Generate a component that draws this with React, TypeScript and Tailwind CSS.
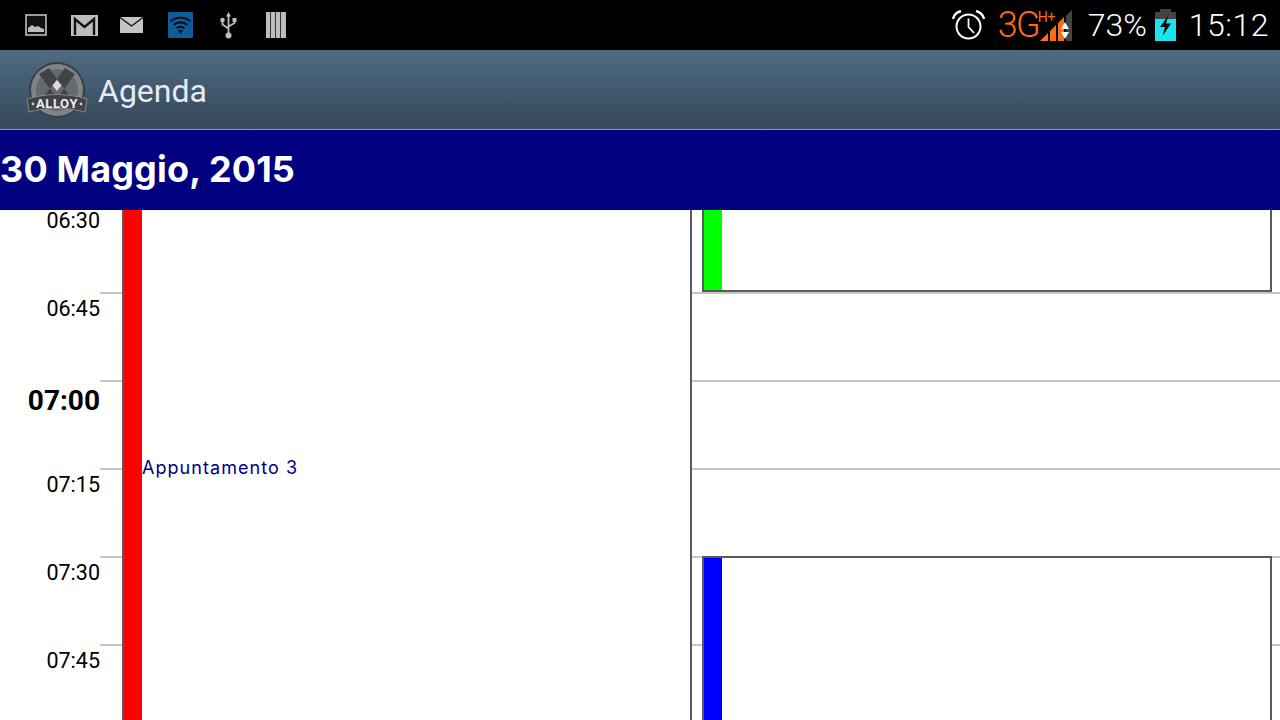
const rows = [
  { label: '06:45', bold: false },
  { label: '07:00', bold: true },
  { label: '07:15', bold: false },
  { label: '07:30', bold: false },
  { label: '07:45', bold: false },
]

function PictureIcon() {
  return (
    <svg width="22" height="22" viewBox="0 0 22 22" className="ml-[25px]">
      <rect x="1" y="1" width="20" height="20" fill="#111" stroke="#bdbdbd" strokeWidth="1.6" />
      <path d="M3 18 V14 L7 11 L10 13 L13 12 L16 14 L19 15 V18 Z" fill="#bdbdbd" />
    </svg>
  )
}

function GmailIcon() {
  return (
    <svg width="27" height="21" viewBox="0 0 27 21" className="ml-[24px]">
      <rect width="27" height="21" fill="#bdbdbd" />
      <path d="M4 20 V4 L13.5 12 L23 4 V20" fill="none" stroke="#111" strokeWidth="2.4" />
    </svg>
  )
}

function MailIcon() {
  return (
    <svg width="23" height="16" viewBox="0 0 23 16" className="ml-[22px]">
      <rect width="23" height="16" fill="#c4c4c4" />
      <path d="M0 0.5 L11.5 9 L23 0.5" fill="none" stroke="#111" strokeWidth="1.4" />
    </svg>
  )
}

function WifiIcon() {
  return (
    <svg width="25" height="26" viewBox="0 0 25 26" className="ml-[25px]">
      <rect width="25" height="26" rx="1" fill="#0f5c99" />
      <path d="M2.5 9.5 C8 4.5 17 4.5 22.5 9.5" fill="none" stroke="#04121f" strokeWidth="2.2" />
      <path d="M5.5 13 C9.5 9.6 15.5 9.6 19.5 13" fill="none" stroke="#04121f" strokeWidth="2.2" />
      <path d="M8.5 16.2 C11 14.4 14 14.4 16.5 16.2" fill="none" stroke="#04121f" strokeWidth="2.2" />
      <path d="M9.5 18 L12.5 22 L15.5 18 Z" fill="#04121f" />
    </svg>
  )
}

function UsbIcon() {
  return (
    <svg width="17" height="27" viewBox="0 0 17 27" className="ml-[27px]">
      <path d="M8.5 0 L11 4.5 H6 Z" fill="#bdbdbd" />
      <path d="M8.5 4 V23 M2.5 9 V12.5 L8.5 16.5 M14.5 9 V11 L8.5 14.5" fill="none" stroke="#bdbdbd" strokeWidth="1.8" />
      <circle cx="2.5" cy="8" r="2.3" fill="#bdbdbd" />
      <rect x="12.5" y="6" width="4" height="4" fill="#bdbdbd" />
      <circle cx="8.5" cy="23.5" r="3" fill="#bdbdbd" />
    </svg>
  )
}

function BarsIcon() {
  return (
    <svg width="20" height="26" viewBox="0 0 20 26" className="ml-[29px]">
      <rect width="20" height="26" fill="#bdbdbd" />
      <path d="M4.5 0 V26 M9.5 0 V26 M14.5 0 V26" stroke="#333" strokeWidth="1" />
    </svg>
  )
}

function AlarmIcon() {
  return (
    <svg width="33" height="30" viewBox="0 0 33 30">
      <circle cx="16.5" cy="16.5" r="12" fill="none" stroke="#fff" strokeWidth="2" />
      <path d="M16.5 8.5 V17 L22 23" fill="none" stroke="#fff" strokeWidth="1.8" />
      <path d="M1 9 C2 4.5 5 2 9 1 M32 9 C31 4.5 28 2 24 1" fill="none" stroke="#fff" strokeWidth="2.4" />
    </svg>
  )
}

function SignalIcon() {
  return (
    <svg width="32" height="31" viewBox="0 0 32 31">
      <path d="M32 0 V31 H26 V6 Z" fill="#444" />
      <path d="M0 31 L8 23 V31 Z M10 21 L16 15 V31 H10 Z M18 13 L24 7 V31 H18 Z" fill="#ff6a13" />
      <path d="M21 19 L25 12 L29 19 Z M21 22 H29 L25 29 Z" fill="#fff" />
    </svg>
  )
}

function BatteryIcon() {
  return (
    <svg width="21" height="32" viewBox="0 0 21 32">
      <rect x="5" y="0" width="11" height="3" fill="#444" />
      <rect x="0" y="3" width="21" height="7" fill="#444" />
      <rect x="0" y="10" width="21" height="22" fill="#17e6f0" />
      <path d="M13.5 6 L5 18 H10 L7.5 27 L16 14.5 H11 Z" fill="#0a0a0a" />
    </svg>
  )
}

function AlloyLogo() {
  return (
    <svg width="62" height="58" viewBox="0 0 62 58" className="ml-[26px]">
      <circle cx="31" cy="29" r="28" fill="#3a3f45" />
      <circle cx="31" cy="29" r="26" fill="#808488" />
      <circle cx="31" cy="29" r="21" fill="#666a6e" />
      <path d="M13 13 L23 7 L49 42 L39 48 Z M49 13 L39 7 L13 42 L23 48 Z" fill="#3f4247" />
      <path d="M31 19 L35.5 24.5 L31 30 L26.5 24.5 Z" fill="#dcdcdc" />
      <path d="M1 38 C20 32 42 32 61 38 L59 51 C42 46 20 46 3 51 Z" fill="#3f4347" stroke="#85888c" strokeWidth="1" />
      <circle cx="7" cy="43" r="1.4" fill="#ccc" />
      <circle cx="55" cy="43" r="1.4" fill="#ccc" />
      <text x="31" y="47" textAnchor="middle" fontSize="13" fontWeight="700" fill="#eee" fontFamily="Roboto, sans-serif" letterSpacing="0.6">ALLOY</text>
    </svg>
  )
}

export default function App() {
  return (
    <div className="w-[1280px] h-[720px] overflow-hidden bg-white flex flex-col font-['Roboto',sans-serif]">
      {/* status bar */}
      <div className="h-[50px] shrink-0 bg-black flex items-center">
        <PictureIcon />
        <GmailIcon />
        <MailIcon />
        <WifiIcon />
        <UsbIcon />
        <BarsIcon />
        <div className="ml-auto flex items-center text-white">
          <AlarmIcon />
          <div className="relative ml-[13px] w-[42px] text-[36px] leading-[50px] font-light text-[#ff6a13] tracking-[-1.5px]">
            3G
            <span className="absolute left-[40px] top-[10px] text-[14px] leading-[14px] font-normal tracking-normal">H+</span>
          </div>
          <SignalIcon />
          <span className="ml-[16px] text-[32px] leading-[50px] font-light">73%</span>
          <div className="ml-[8px]">
            <BatteryIcon />
          </div>
          <span className="ml-[13px] mr-[11px] text-[32px] leading-[50px] font-light tracking-[0.5px]">15:12</span>
        </div>
      </div>

      {/* action bar */}
      <div className="h-[80px] shrink-0 flex items-center bg-gradient-to-b from-[#4f6b82] to-[#35475a] border-b border-[#8c9cab]">
        <AlloyLogo />
        <span className="ml-[10px] mt-[2px] text-[32px] text-[#e6ebef]">Agenda</span>
      </div>

      {/* date */}
      <div className="h-[80px] shrink-0 bg-[#000080] flex items-center pb-[2px]">
        <span className="text-[36px] font-bold text-white font-['Inter',sans-serif] tracking-[0.15px]">30 Maggio, 2015</span>
      </div>

      {/* day grid */}
      <div className="relative flex-1 flex min-h-0 overflow-hidden">
        <div className="w-[122px] shrink-0 flex flex-col">
          <div className="h-[82px] shrink-0 pr-[22px] text-right text-[21.5px] leading-[22px] text-black">06:30</div>
          {rows.map((r) => (
            <div key={r.label} className="h-[88px] shrink-0 pl-[100px]">
              <div className="h-[2px] bg-[#c8c8c8]" />
              <div
                className={
                  r.bold
                    ? 'w-[122px] -ml-[100px] pr-[22px] pt-[1px] text-right text-[28px] leading-[36px] font-bold text-black'
                    : 'w-[122px] -ml-[100px] pr-[22px] pt-[2px] text-right text-[21.5px] leading-[26px] text-black'
                }
              >
                {r.label}
              </div>
            </div>
          ))}
        </div>

        {/* first column: one long appointment */}
        <div className="w-[568px] shrink-0 flex border-l-2 border-[#5a5a5a]">
          <div className="w-[18px] bg-[#ff0000]" />
          <div className="pt-[247px] text-[18px] leading-[22px] tracking-[1.05px] text-[#000080] font-['Inter',sans-serif]">Appuntamento 3</div>
        </div>

        {/* second column */}
        <div className="relative flex-1 flex flex-col border-l-2 border-[#5a5a5a]">
          <div className="h-[82px] shrink-0" />
          {rows.map((r) => (
            <div key={r.label} className="h-[88px] shrink-0 border-t-2 border-[#c8c8c8]" />
          ))}
          <div className="absolute left-[10px] top-0 w-[570px] h-[82px] flex border-x-2 border-b-2 border-[#5a5a5a] bg-white">
            <div className="w-[18px] bg-[#00ff00]" />
          </div>
          <div className="absolute left-[10px] top-[346px] w-[570px] h-[200px] flex border-x-2 border-t-2 border-[#5a5a5a] bg-white">
            <div className="w-[18px] bg-[#0000ff]" />
          </div>
        </div>
      </div>
    </div>
  )
}
